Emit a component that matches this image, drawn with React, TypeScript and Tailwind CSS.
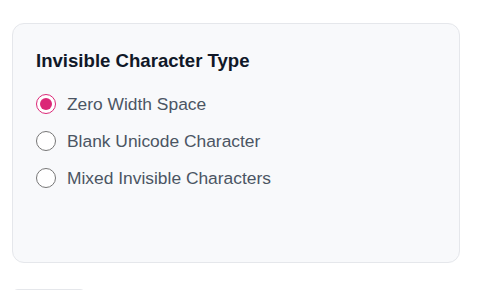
import React, { useState } from 'react';

const options = [
  { value: 'zwsp', label: 'Zero Width Space' },
  { value: 'blank', label: 'Blank Unicode Character' },
  { value: 'mixed', label: 'Mixed Invisible Characters' },
];

const App: React.FC = () => {
  const [type, setType] = useState('zwsp');

  return (
    <div className="min-h-screen bg-white px-3 pt-[23px] font-['Liberation_Sans',Arial,sans-serif]">
      <div className="w-[448px] h-[240px] bg-[#f8f9fb] border border-gray-200 rounded-xl px-[23px] pt-[23px]">
        <h3 className="text-[18.6px] leading-7 font-bold text-gray-900 mb-[17px]">Invisible Character Type</h3>
        <div className="flex flex-col gap-[13px]">
          {options.map((o) => (
            <label key={o.value} className="flex items-center gap-[11px] cursor-pointer">
              <input
                type="radio"
                name="type"
                value={o.value}
                checked={type === o.value}
                onChange={() => setType(o.value)}
                className="w-5 h-5 m-0 accent-[#db2777]"
              />
              <span className="text-[17.4px] leading-6 text-[#4b5563]">{o.label}</span>
            </label>
          ))}
        </div>
      </div>
      <div className="mt-[26px] w-[74px] h-10 border border-gray-200 rounded-md" />
    </div>
  );
};

export default App;
